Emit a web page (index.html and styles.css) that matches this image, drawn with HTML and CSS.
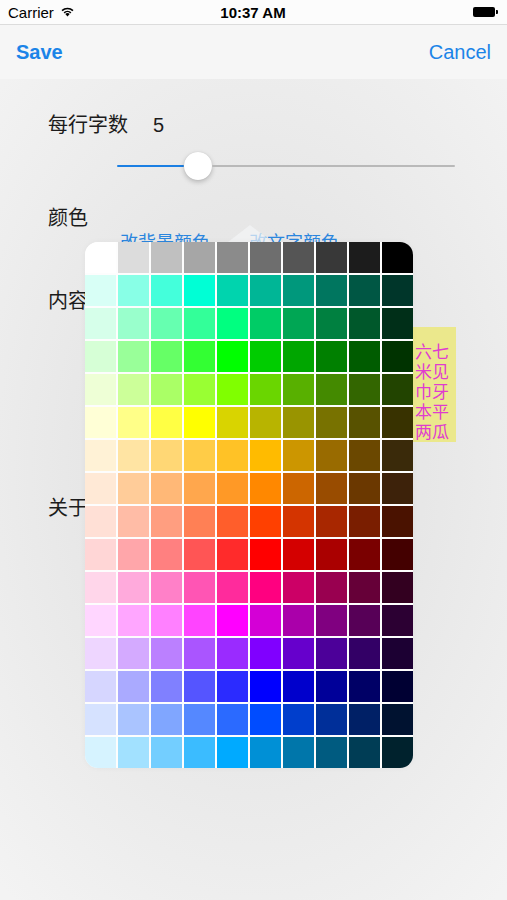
FILE: index.html
```html
<!DOCTYPE html>
<html lang="zh">
<head>
<meta charset="utf-8">
<title>设置</title>
<link rel="stylesheet" href="styles.css">
</head>
<body>
<div class="screen">
  <div class="status">
    <div class="carrier">Carrier
      <svg class="wifi" width="15" height="11" viewBox="0 0 15 11"><path d="M7.5 10.5 L5.3 8.1 A3.2 3.2 0 0 1 9.7 8.1 Z" fill="#000"/><path d="M3.6 6.3 A5.6 5.6 0 0 1 11.4 6.3 L10.3 7.4 A4.1 4.1 0 0 0 4.7 7.4 Z" fill="#000"/><path d="M1.5 4.1 A8.6 8.6 0 0 1 13.5 4.1 L12.4 5.2 A7.1 7.1 0 0 0 2.6 5.2 Z" fill="#000"/></svg>
    </div>
    <div class="time">10:37 AM</div>
    <div class="battery-wrap"><span class="battery"></span><span class="nub"></span></div>
  </div>
  <div class="nav">
    <span class="nav-btn save">Save</span>
    <span class="nav-btn">Cancel</span>
  </div>
  <div class="content">
    <div class="label">每行字数<span class="value">5</span></div>
    <div class="slider">
      <span class="track fill"></span>
      <span class="thumb"></span>
      <span class="track rest"></span>
    </div>
    <div class="label gap-color">颜色</div>
    <div class="color-btns">
      <span class="link">改背景颜色</span>
      <span class="link">改文字颜色</span>
    </div>
    <div class="label gap-content">内容</div>
    <div class="preview">
      <div>六七</div>
      <div>米见</div>
      <div>巾牙</div>
      <div>本平</div>
      <div>两瓜</div>
      <div>业瓜</div>
    </div>
    <div class="label gap-about">关于</div>
  </div>
  <div class="arrow"></div>
  <div class="popover" id="palette"></div>
</div>
<script src="script.js"></script>
</body>
</html>
```
FILE: styles.css
```css
html, body { margin: 0; padding: 0; }
body {
  font-family: "Liberation Sans", "Noto Sans CJK SC", sans-serif;
  background: #eee;
}
.screen {
  width: 507px;
  height: 900px;
  position: relative;
  overflow: hidden;
  background: radial-gradient(ellipse 75% 62% at 50% 52%, #e4e4e4 0%, #e7e7e7 45%, #f3f3f3 100%);
}
.status {
  height: 25px;
  display: grid;
  grid-template-columns: 1fr auto 1fr;
  align-items: center;
  padding: 0 9px 0 8px;
  background: #fcfcfc;
  border-bottom: 1px solid #dcdcdc;
  font-size: 15px;
  color: #000;
  box-sizing: border-box;
}
.carrier { display: flex; align-items: center; gap: 6px; }
.wifi { display: block; margin-top: -1px; }
.time { font-weight: bold; }
.battery-wrap { display: flex; justify-content: flex-end; align-items: center; }
.battery { width: 22px; height: 10px; background: #000; border-radius: 2px; }
.nub { width: 2px; height: 4px; background: #000; border-radius: 0 1px 1px 0; margin-left: 1px; }
.nav {
  height: 54px;
  display: flex;
  justify-content: space-between;
  align-items: center;
  padding: 0 16px;
  background: #f6f6f6;
}
.nav-btn { font-size: 20px; color: #1b84e8; }
.save { font-weight: bold; }
.content { padding: 33px 0 0 48px; }
.label {
  font-family: "Noto Sans CJK SC", sans-serif;
  font-size: 20px;
  line-height: 24px;
  color: #1c1c1c;
}
.value { font-family: "Liberation Sans", sans-serif; margin-left: 25px; }
.slider {
  margin: 12px 0 0 69px;
  width: 338px;
  height: 34px;
  display: flex;
  align-items: center;
}
.track { height: 2px; border-radius: 1px; }
.fill { flex: 0 0 67px; background: #1b7fe3; }
.rest { flex: 1; background: #b9b9b9; }
.thumb {
  flex: 0 0 28px;
  height: 28px;
  border-radius: 50%;
  background: #fff;
  box-shadow: 0 2px 5px rgba(0,0,0,0.22), 0 0 1px rgba(0,0,0,0.15);
}
.gap-color { margin-top: 22px; }
.color-btns {
  margin: 1px 0 0 72px;
  display: flex;
  gap: 39px;
  font-family: "Noto Sans CJK SC", sans-serif;
  font-size: 18px;
  line-height: 22px;
  color: #2b86de;
}
.gap-content { margin-top: 36px; }
.preview {
  margin: 15px 0 0 332px;
  width: 76px;
  height: 115px;
  box-sizing: border-box;
  padding: 14px 0 0 35px;
  overflow: hidden;
  background: #ebe88c;
  color: #df3ccf;
  font-family: "Noto Sans CJK SC", sans-serif;
  font-size: 17px;
  line-height: 20px;
}
.gap-about { margin-top: 53px; }
.arrow {
  position: absolute;
  left: 228px;
  top: 225px;
  width: 0;
  height: 0;
  border-left: 22px solid transparent;
  border-right: 22px solid transparent;
  border-bottom: 17px solid rgba(244,245,247,0.7);
}
.popover {
  position: absolute;
  left: 85px;
  top: 242px;
  width: 328px;
  height: 526px;
  display: grid;
  grid-template-columns: repeat(10, 31px);
  grid-auto-rows: 31px;
  gap: 2px;
  background: #fdfdfd;
  border-radius: 13px;
  overflow: hidden;
  box-shadow: 0 0 6px rgba(0,0,0,0.04);
}
.swatch { width: 31px; height: 31px; }
```
FILE: script.js
```js
var rows = [
  ["#ffffff","#dcdcdc","#c0c0c0","#a6a6a6","#8b8b8b","#6e6e6e","#555555","#383838","#1c1c1c","#000000"],
  ["#d8fff6","#88ffe6","#44ffdb","#00ffd5","#00d4ae","#00b696","#00987c","#00765f","#005744","#00362a"],
  ["#d6ffea","#99ffcc","#66ffb0","#33ff99","#00ff80","#00cc66","#00a654","#008040","#00582b","#002f18"],
  ["#d6ffd6","#99ff99","#66ff66","#33ff33","#00ff00","#00cc00","#00a600","#008000","#005c00","#003300"],
  ["#eeffd6","#ccff99","#aaff66","#99ff33","#80ff00","#6ad600","#58b000","#448a00","#336600","#224400"],
  ["#ffffd6","#ffff88","#ffff44","#ffff00","#d9d400","#b8b400","#999400","#787200","#585200","#383200"],
  ["#fff2d6","#ffe4a3","#ffd775","#ffcc47","#ffc226","#ffbb00","#cc9600","#996b00","#6b4800","#3a2a0a"],
  ["#ffe9d6","#ffcc99","#ffb877","#ffa74d","#ff9926","#ff8800","#cc6600","#994c00","#6b3800","#3d220a"],
  ["#ffe0d6","#ffbca6","#ff9e80","#ff8055","#ff5e2b","#ff4000","#d43400","#a82700","#7a1e00","#4a1200"],
  ["#ffd6d6","#ffa6aa","#ff8080","#ff5555","#ff2b2b","#ff0000","#d40000","#aa0000","#7a0000","#440000"],
  ["#ffd6ea","#ffaadc","#ff80c8","#ff55b4","#ff2b9c","#ff0080","#cc0066","#990050","#660038","#330020"],
  ["#ffd6ff","#ffa6ff","#ff80ff","#ff44ff","#ff00ff","#d400d6","#aa00aa","#800080","#570057","#2c0033"],
  ["#eed6ff","#d4aaff","#bb80ff","#aa55ff","#9a2bff","#8000ff","#6600cc","#4c0099","#330066","#1c0033"],
  ["#d6d6ff","#aaaaff","#8080ff","#5555ff","#2b2bff","#0000ff","#0000cc","#000099","#000066","#000033"],
  ["#d6e2ff","#aac4ff","#80a6ff","#5588ff","#2b6aff","#004cff","#003ecc","#002f99","#002066","#001230"],
  ["#d6f3ff","#a2e1ff","#73ceff","#3bbcff","#00aaff","#0090d6","#0076aa","#005b80","#003d55","#00222d"]
];
var box = document.getElementById("palette");
rows.forEach(function (row) {
  row.forEach(function (c) {
    var d = document.createElement("div");
    d.className = "swatch";
    d.style.background = c;
    box.appendChild(d);
  });
});
```
